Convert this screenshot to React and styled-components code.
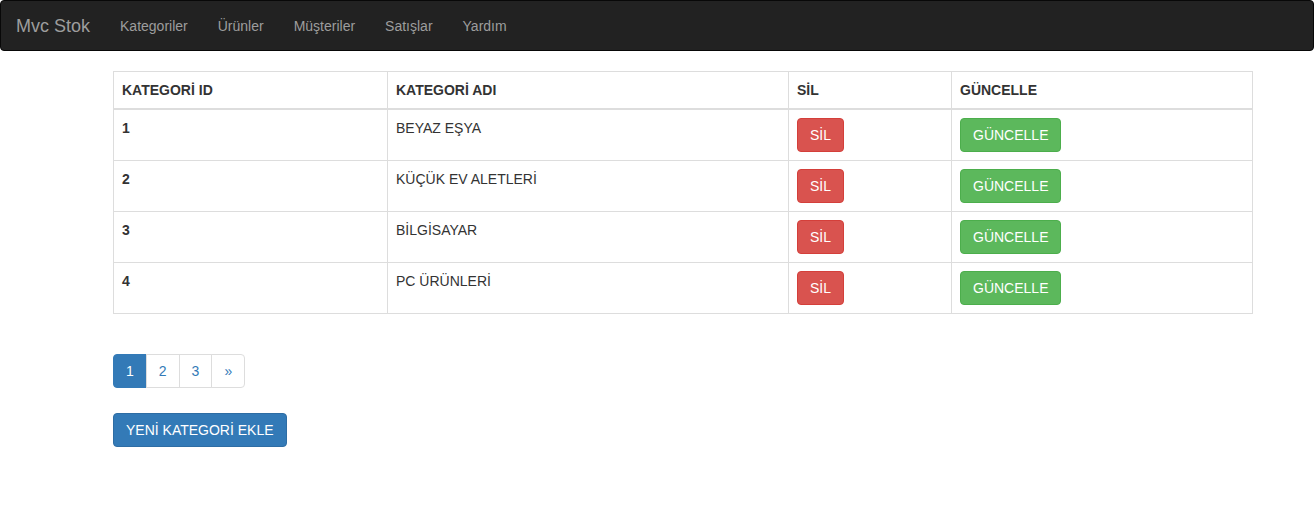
import React from "react";
import styled, { createGlobalStyle } from "styled-components";

const GlobalStyle = createGlobalStyle`
  * { box-sizing: border-box; }
  body {
    margin: 0;
    font-family: "Liberation Sans", Arial, sans-serif;
    font-size: 14px;
    line-height: 1.42857;
    color: #333;
    background: #fff;
  }
`;

const Navbar = styled.nav`
  display: flex;
  align-items: center;
  height: 51px;
  background: #222;
  border: 1px solid #080808;
  border-radius: 4px;
  margin-bottom: 20px;
`;

const Brand = styled.a`
  padding: 15px;
  font-size: 18px;
  line-height: 20px;
  color: #9d9d9d;
  text-decoration: none;
`;

const NavLink = styled.a`
  padding: 15px;
  line-height: 20px;
  color: #9d9d9d;
  text-decoration: none;
`;

const Main = styled.main`
  margin-left: 113px;
  width: 1140px;
`;

const Table = styled.table`
  width: 100%;
  border-collapse: collapse;
  border: 1px solid #ddd;
  margin-bottom: 20px;

  th, td {
    border: 1px solid #ddd;
    padding: 8px;
    line-height: 20px;
    text-align: left;
    vertical-align: top;
  }

  thead th {
    border-bottom: 2px solid #ddd;
    vertical-align: bottom;
  }
`;

const Btn = styled.button`
  display: inline-block;
  padding: 6px 12px;
  font-family: inherit;
  font-size: 14px;
  line-height: 20px;
  color: #fff;
  border: 1px solid ${(p) => p.$border};
  background: ${(p) => p.$bg};
  border-radius: 4px;
  cursor: pointer;
`;

const Pagination = styled.ul`
  display: inline-flex;
  list-style: none;
  padding: 0;
  margin: 20px 0 0;
`;

const PageItem = styled.li`
  a {
    display: block;
    padding: 6px 12px;
    line-height: 20px;
    margin-left: -1px;
    border: 1px solid ${(p) => (p.$active ? "#337ab7" : "#ddd")};
    background: ${(p) => (p.$active ? "#337ab7" : "#fff")};
    color: ${(p) => (p.$active ? "#fff" : "#337ab7")};
    text-decoration: none;
  }
  &:first-child a {
    margin-left: 0;
    border-radius: 4px 0 0 4px;
  }
  &:last-child a {
    border-radius: 0 4px 4px 0;
  }
`;

const AddRow = styled.div`
  margin-top: 25px;
`;

const rows = [
  [1, "BEYAZ EŞYA"],
  [2, "KÜÇÜK EV ALETLERİ"],
  [3, "BİLGİSAYAR"],
  [4, "PC ÜRÜNLERİ"],
];

export default function App() {
  return (
    <>
      <GlobalStyle />
      <Navbar>
        <Brand href="#">Mvc Stok</Brand>
        {["Kategoriler", "Ürünler", "Müşteriler", "Satışlar", "Yardım"].map((l) => (
          <NavLink key={l} href="#">{l}</NavLink>
        ))}
      </Navbar>
      <Main>
        <Table>
          <colgroup>
            <col style={{ width: 274 }} />
            <col style={{ width: 401 }} />
            <col style={{ width: 163 }} />
            <col />
          </colgroup>
          <thead>
            <tr>
              <th>KATEGORİ ID</th>
              <th>KATEGORİ ADI</th>
              <th>SİL</th>
              <th>GÜNCELLE</th>
            </tr>
          </thead>
          <tbody>
            {rows.map(([id, name]) => (
              <tr key={id}>
                <th>{id}</th>
                <td>{name}</td>
                <td>
                  <Btn $bg="#d9534f" $border="#d43f3a">SİL</Btn>
                </td>
                <td>
                  <Btn $bg="#5cb85c" $border="#4cae4c">GÜNCELLE</Btn>
                </td>
              </tr>
            ))}
          </tbody>
        </Table>
        <Pagination>
          <PageItem $active><a href="#">1</a></PageItem>
          <PageItem><a href="#">2</a></PageItem>
          <PageItem><a href="#">3</a></PageItem>
          <PageItem><a href="#">»</a></PageItem>
        </Pagination>
        <AddRow>
          <Btn $bg="#337ab7" $border="#2e6da4">YENİ KATEGORİ EKLE</Btn>
        </AddRow>
      </Main>
    </>
  );
}
